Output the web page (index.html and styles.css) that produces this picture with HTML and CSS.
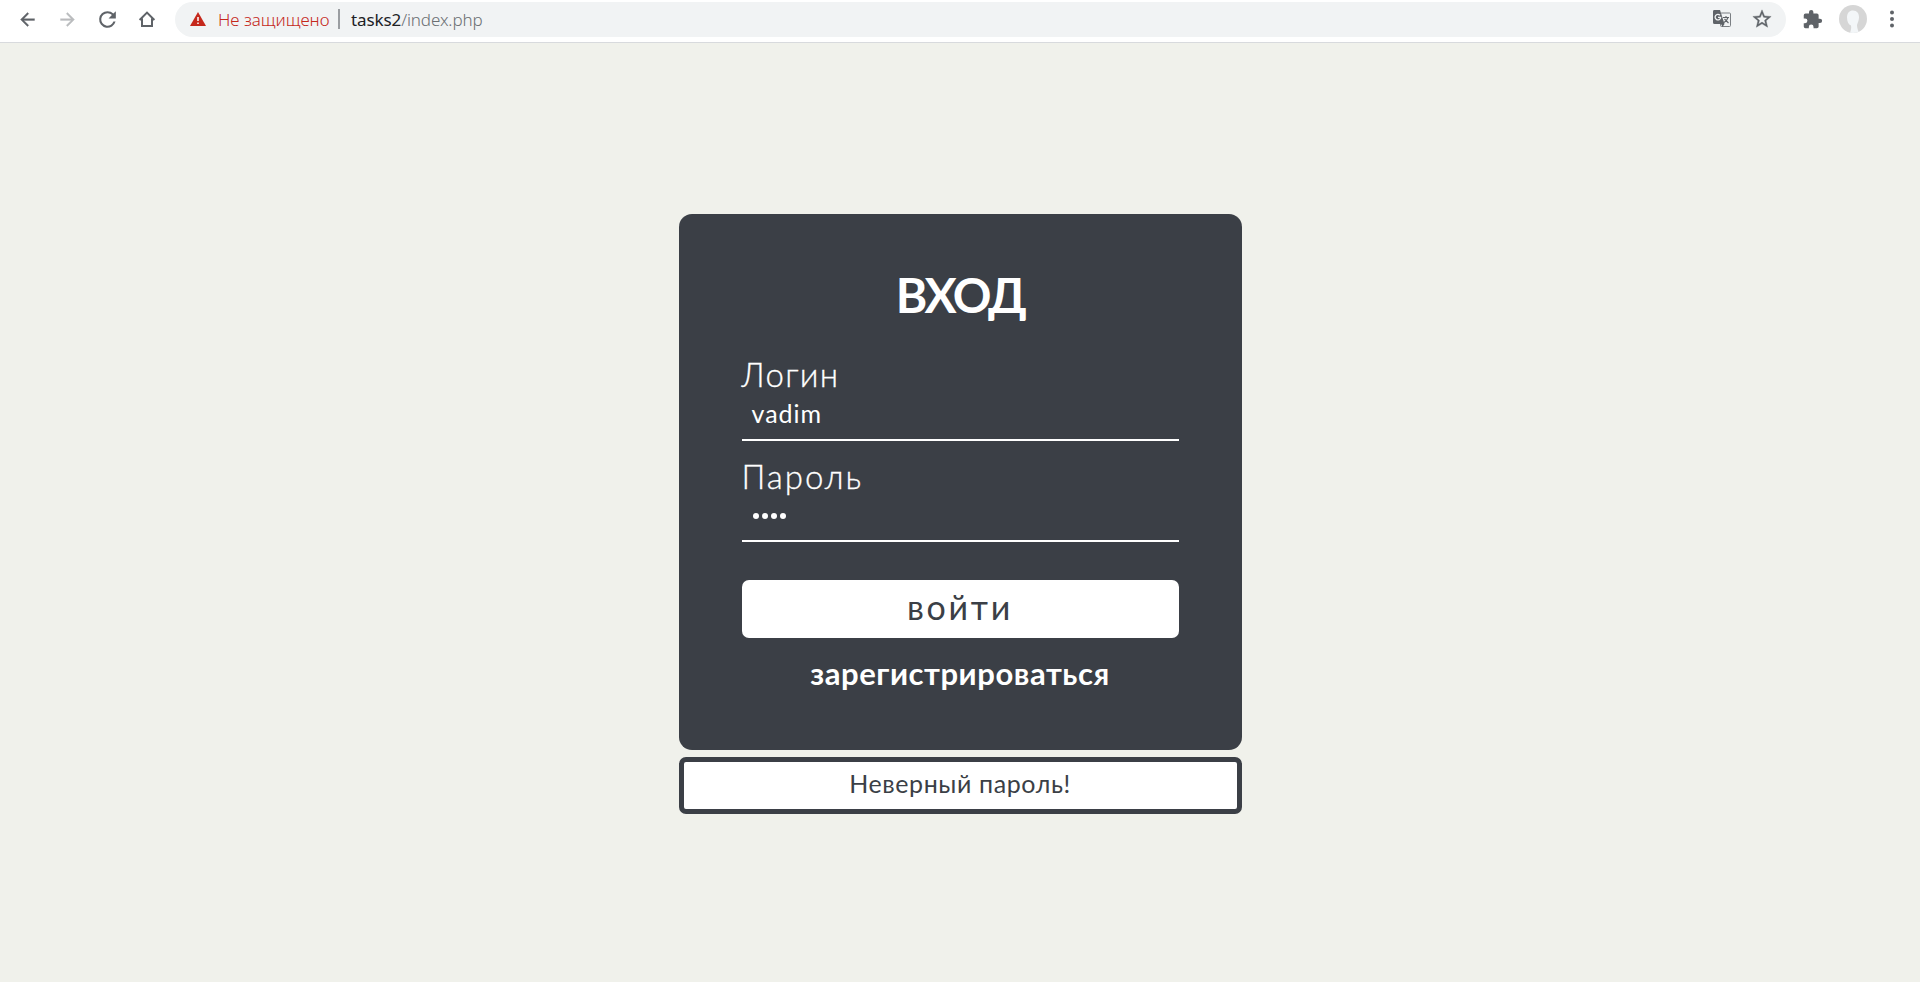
FILE: index.html
```html
<!DOCTYPE html>
<html lang="ru">
<head>
<meta charset="utf-8">
<title>Вход</title>
<link rel="stylesheet" href="styles.css">
</head>
<body>
<header class="toolbar">
  <nav class="nav">
    <svg width="21" height="21" viewBox="0 0 24 24" fill="#5f6368"><path d="M20 11H7.830l5.590-5.590L12 4l-8 8 8 8 1.410-1.410L7.830 13H20z" stroke="#5f6368" stroke-width=".4"/></svg>
    <svg width="21" height="21" viewBox="0 0 24 24" fill="#babcbe"><path d="M12 4l-1.410 1.410L16.170 11H4v2h12.170l-5.580 5.590L12 20l8-8z" stroke="#babcbe" stroke-width=".4"/></svg>
    <svg class="reload" width="25" height="25" viewBox="0 0 24 24" fill="#5f6368"><path d="M17.650 6.350A7.960 7.960 0 0 0 12 4a8 8 0 1 0 7.730 10h-2.080A6 6 0 1 1 12 6c1.660 0 3.140.69 4.220 1.780L13 11h7V4z"/></svg>
    <svg width="20" height="20" viewBox="0 0 20 20" fill="none" stroke="#5f6368" stroke-width="2"><path d="M2.600 11 10 3.600l7.400 7.400M5 9.500V17h10V9.500"/></svg>
  </nav>
  <div class="omnibox">
    <svg class="warn" width="16" height="14" viewBox="0 0 16 14"><path fill="#c5281c" d="M8 0l8 14H0z"/><path stroke="#fff" stroke-width="1.500" d="M8 5v4M8 10.500v1.500"/></svg>
    <span class="insecure">Не защищено</span>
    <span class="divider"></span>
    <span class="url"><b>tasks2</b>/index.php</span>
    <span class="spacer"></span>
    <svg class="translate" width="20" height="20" viewBox="0 0 20 20"><rect x="8.500" y="4" width="10" height="13.500" rx="1" fill="#f1f3f4" stroke="#7b7f83"/><path fill="#5f6368" d="M2 1h6l4.500 14H2.500a1.500 1.500 0 0 1-1.500-1.500v-11A1.500 1.500 0 0 1 2 1zM9 15h3.500L10.500 18z"/><path fill="none" stroke="#f1f3f4" stroke-width="1.300" d="M8 6.300A2.800 2.800 0 1 0 8.700 8.300H6"/><path fill="none" stroke="#5f6368" stroke-width="1.100" d="M11 8.500h6M14 7v1.500M16 8.500q-1 3.500-4 5M12.500 10l4 4"/></svg>
    <svg class="star" width="22" height="22" viewBox="0 0 24 24" fill="#5f6368"><path stroke="#5f6368" stroke-width=".4" d="M22 9.240l-7.190-.62L12 2 9.190 8.630 2 9.240l5.460 4.730L5.820 21 12 17.270 18.180 21l-1.630-7.030zM12 15.400l-3.760 2.270 1-4.280-3.320-2.880 4.380-.38L12 6.100l1.710 4.040 4.380.38-3.320 2.880 1 4.280z"/></svg>
  </div>
  <div class="actions">
    <svg width="21" height="21" viewBox="0 0 24 24" fill="#5f6368"><path d="M20.500 11H19V7a2 2 0 0 0-2-2h-4V3.500a2.500 2.500 0 0 0-5 0V5H4a2 2 0 0 0-2 2v3.800h1.500a2.700 2.700 0 0 1 0 5.400H2V20a2 2 0 0 0 2 2h3.800v-1.500a2.700 2.700 0 0 1 5.400 0V22H17a2 2 0 0 0 2-2v-4h1.500a2.500 2.500 0 0 0 0-5z"/></svg>
    <svg class="avatar" width="28" height="28" viewBox="0 0 28 28"><defs><clipPath id="c"><circle cx="14" cy="14" r="14"/></clipPath></defs><g clip-path="url(#c)"><path fill="#d6d6d6" d="M0 0h28v28H0z"/><path fill="#f3f6f8" d="M14 5.500c4 0 6.200 3 6 7-.1 3.500-1.500 5.500-2 7.500 0 3 1 5 2 8h-9c1-3 1.500-5 1-7.500-2.500-1-4-4-4-8 0-4.500 2.500-7 6-7z"/></g></svg>
    <svg class="dots" width="6" height="18" viewBox="0 0 6 18" fill="#5f6368"><circle cx="3" cy="2.500" r="2"/><circle cx="3" cy="9" r="2"/><circle cx="3" cy="15.500" r="2"/></svg>
  </div>
</header>
<main class="page">
  <form class="card">
    <h1 class="title">ВХОД</h1>
    <label class="label">Логин</label>
    <div class="field">vadim</div>
    <label class="label second">Пароль</label>
    <div class="field password"><i></i><i></i><i></i><i></i></div>
    <div class="submit">войти</div>
    <a class="register">зарегистрироваться</a>
  </form>
  <div class="error">Неверный пароль!</div>
</main>
</body>
</html>
```
FILE: styles.css
```css
* { box-sizing: border-box; }
body {
  margin: 0;
  height: 982px;
  overflow: hidden;
  background: #f0f1eb;
  font-family: Lato, "Open Sans", sans-serif;
}
svg { display: block; flex: none; }

.toolbar {
  display: flex;
  align-items: center;
  height: 43px;
  padding: 0 0 4px 17px;
  background: #fff;
  border-bottom: 1px solid #d8dadd;
  font-family: "Noto Sans", sans-serif;
}
.nav { display: flex; align-items: center; gap: 19px; width: 158px; }
.reload { margin: 0 -2px; }
.omnibox {
  display: flex;
  align-items: center;
  width: 1611px;
  height: 35px;
  padding: 0 13px 0 15px;
  border-radius: 18px;
  background: #f1f3f4;
  font-size: 17px;
  line-height: 24px;
}
.insecure { margin-left: 12px; width: 120px; color: #c5281c; font-weight: 350; white-space: nowrap; }
.divider { width: 2px; height: 20px; background: #9a9da1; }
.url { margin-left: 11px; color: #6b6f73; font-weight: 350; letter-spacing: -.1px; }
.url b { color: #202124; font-weight: 400; }
.insecure, .url { position: relative; top: 1px; }
.spacer { flex: 1; }
.translate { margin-right: 19px; }
.actions { display: flex; align-items: center; padding-left: 16px; }
.avatar { margin-left: 16px; }
.dots { margin-left: 22px; }

.page { display: flex; flex-direction: column; align-items: center; padding-top: 171px; }
.card {
  display: flex;
  flex-direction: column;
  width: 563px;
  height: 536px;
  padding: 49px 63px 0;
  border-radius: 13px;
  background: #3b3f46;
  color: #fff;
}
.title { margin: 0; height: 82px; font-size: 48px; line-height: 63px; font-weight: 700; letter-spacing: -2.5px; text-align: center; }
.label { height: 50px; font-size: 33px; line-height: 58px; font-weight: 300; letter-spacing: 1.300px; -webkit-text-stroke: .3px #fff; }
.field {
  height: 46px;
  padding-left: 10px;
  border-bottom: 2px solid #fff;
  font-size: 25px;
  line-height: 36px;
  letter-spacing: 1px;
}
.second { height: 55px; line-height: 70px; letter-spacing: 2px; }
.password { display: flex; gap: 3px; padding: 17px 0 0 11px; }
.password i { width: 6px; height: 6px; border-radius: 50%; background: #fff; }
.submit {
  height: 58px;
  margin-top: 38px;
  border-radius: 7px;
  background: #fff;
  color: #3b3f46;
  font-size: 34px;
  line-height: 53px;
  letter-spacing: 2.700px;
  text-align: center;
}
.register { height: 60px; margin-top: 13px; font-size: 31px; line-height: 44px; font-weight: 700; letter-spacing: .55px; text-align: center; }
.error {
  width: 563px;
  height: 57px;
  margin-top: 7px;
  border: 5px solid #3b3f46;
  border-radius: 7px;
  background: #fff;
  color: #3b3f46;
  font-size: 25px;
  line-height: 42px;
  letter-spacing: .6px;
  text-align: center;
}
```
